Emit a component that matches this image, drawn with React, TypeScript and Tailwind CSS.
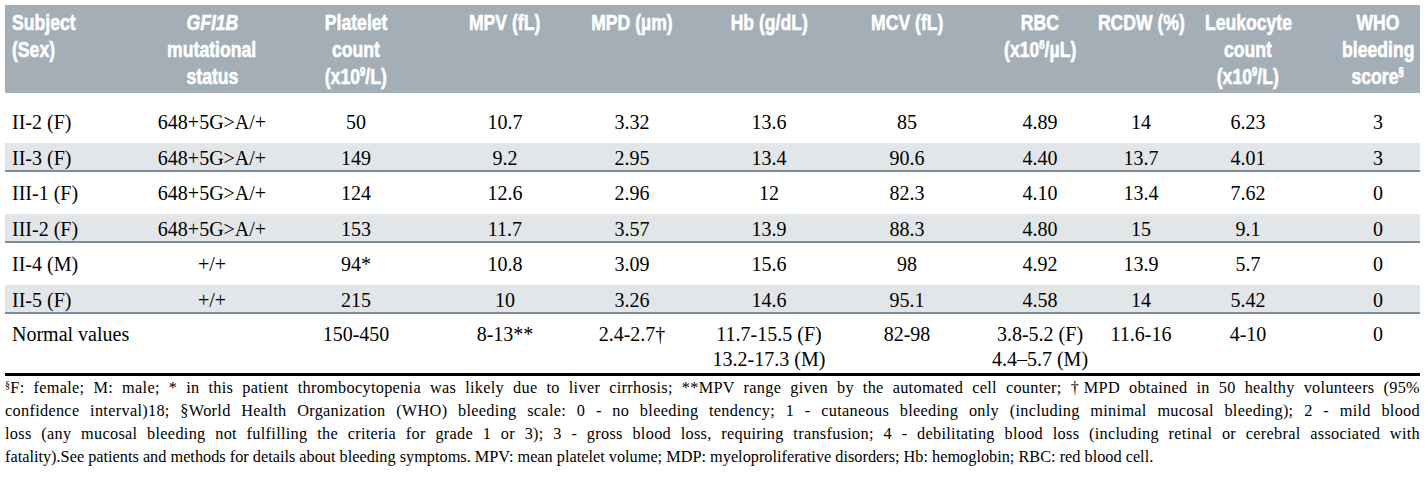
import React from 'react';

const COLS = 'grid grid-cols-[145px_124px_164px_134px_120px_154px_122px_144px_58px_156px_94px]';
const SERIF = { fontFamily: '"Liberation Serif", "Times New Roman", serif' };

type Row = string[];

const GROUPS: Row[][] = [
  [
    ['II-2 (F)', '648+5G>A/+', '50', '10.7', '3.32', '13.6', '85', '4.89', '14', '6.23', '3'],
    ['II-3 (F)', '648+5G>A/+', '149', '9.2', '2.95', '13.4', '90.6', '4.40', '13.7', '4.01', '3'],
  ],
  [
    ['III-1 (F)', '648+5G>A/+', '124', '12.6', '2.96', '12', '82.3', '4.10', '13.4', '7.62', '0'],
    ['III-2 (F)', '648+5G>A/+', '153', '11.7', '3.57', '13.9', '88.3', '4.80', '15', '9.1', '0'],
  ],
  [
    ['II-4 (M)', '+/+', '94*', '10.8', '3.09', '15.6', '98', '4.92', '13.9', '5.7', '0'],
    ['II-5 (F)', '+/+', '215', '10', '3.26', '14.6', '95.1', '4.58', '14', '5.42', '0'],
  ],
];

function Cells({ row }: { row: React.ReactNode[] }) {
  return (
    <>
      {row.map((cell, i) =>
        i === 0 ? (
          <div key={i} className="pl-[7px] whitespace-nowrap">{cell}</div>
        ) : (
          <div key={i} className={`flex justify-center whitespace-nowrap text-center ${i === 10 ? 'pl-[10px]' : ''}`}>
            {cell}
          </div>
        )
      )}
    </>
  );
}

// header face is a heavy condensed sans; no narrow font installed so squeeze it
function HeadLine({ children, left }: { children: React.ReactNode; left?: boolean }) {
  return (
    <span className={`inline-block whitespace-nowrap scale-x-[0.8] ${left ? 'origin-left' : 'origin-center'}`}>
      {children}
    </span>
  );
}

function Header() {
  const h = (lines: React.ReactNode[]) => (
    <div className="flex flex-col items-center">
      {lines.map((l, i) => <HeadLine key={i}>{l}</HeadLine>)}
    </div>
  );
  const sup = (s: string) => <sup className="text-[12px] -top-[8px]">{s}</sup>;
  return (
    <div
      className={`${COLS} bg-[#a3aeb7] text-white font-bold text-[22px] leading-[27px] pt-[4px] pb-[3px] [-webkit-text-stroke:0.6px_white]`}
      style={{ fontFamily: '"Liberation Sans", Arial, sans-serif' }}
    >
      <div className="pl-[7px] flex flex-col items-start">
        <HeadLine left>Subject</HeadLine>
        <HeadLine left>(Sex)</HeadLine>
      </div>
      {h([<i key="g">GFI1B</i>, 'mutational', 'status'])}
      {h(['Platelet', 'count', <>(x10{sup('9')}/L)</>])}
      {h(['MPV (fL)'])}
      {h(['MPD (µm)'])}
      {h(['Hb (g/dL)'])}
      {h(['MCV (fL)'])}
      {h(['RBC', <>(x10{sup('6')}/µL)</>])}
      {h(['RCDW (%)'])}
      {h(['Leukocyte', 'count', <>(x10{sup('9')}/L)</>])}
      <div className="pl-[10px]">{h(['WHO', 'bleeding', <>score{sup('§')}</>])}</div>
    </div>
  );
}

export default function App() {
  return (
    <div className="bg-white w-[1427px] h-[480px] pt-[5px] px-[5px] text-black" style={SERIF}>
      <div className="w-[1415px]">
        <Header />
        <div className="text-[20px]">
          {GROUPS.map((group, gi) => (
            <div key={gi} className="border-b-2 border-[#7e8c97]">
              <div className={`${COLS} items-center ${gi === 0 ? 'h-[50px] pt-[8px]' : 'h-[42px]'}`}>
                <Cells row={group[0]} />
              </div>
              <div className={`${COLS} items-center h-[27px] bg-[#e3e6e9]`}>
                <Cells row={group[1]} />
              </div>
            </div>
          ))}
          <div className={`${COLS} items-start h-[62px] pt-[8px] leading-[25px] border-b-[3px] border-black`}>
            <Cells
              row={[
                'Normal values',
                '',
                '150-450',
                '8-13**',
                '2.4-2.7†',
                <div key="hb" className="flex flex-col items-center">
                  <span>11.7-15.5 (F)</span>
                  <span>13.2-17.3 (M)</span>
                </div>,
                '82-98',
                <div key="rbc" className="flex flex-col items-center">
                  <span>3.8-5.2 (F)</span>
                  <span>4.4–5.7 (M)</span>
                </div>,
                '11.6-16',
                '4-10',
                '0',
              ]}
            />
          </div>
        </div>
        <div className="text-[16.3px] leading-[23px]">
          <p className="text-justify [text-align-last:justify] tracking-[0.3px]">
            <sup className="text-[10px]">§</sup>F: female; M: male; * in this patient thrombocytopenia was likely due to liver cirrhosis; **MPV range given by the automated cell counter; †MPD obtained in 50 healthy volunteers (95%
          </p>
          <p className="text-justify [text-align-last:justify] tracking-[0.3px]">
            confidence interval)18; §World Health Organization (WHO) bleeding scale: 0 - no bleeding tendency; 1 - cutaneous bleeding only (including minimal mucosal bleeding); 2 - mild blood
          </p>
          <p className="text-justify [text-align-last:justify] tracking-[0.3px]">
            loss (any mucosal bleeding not fulfilling the criteria for grade 1 or 3); 3 - gross blood loss, requiring transfusion; 4 - debilitating blood loss (including retinal or cerebral associated with
          </p>
          <p>
            fatality).See patients and methods for details about bleeding symptoms. MPV: mean platelet volume; MDP: myeloproliferative disorders; Hb: hemoglobin; RBC: red blood cell.
          </p>
        </div>
      </div>
    </div>
  );
}
